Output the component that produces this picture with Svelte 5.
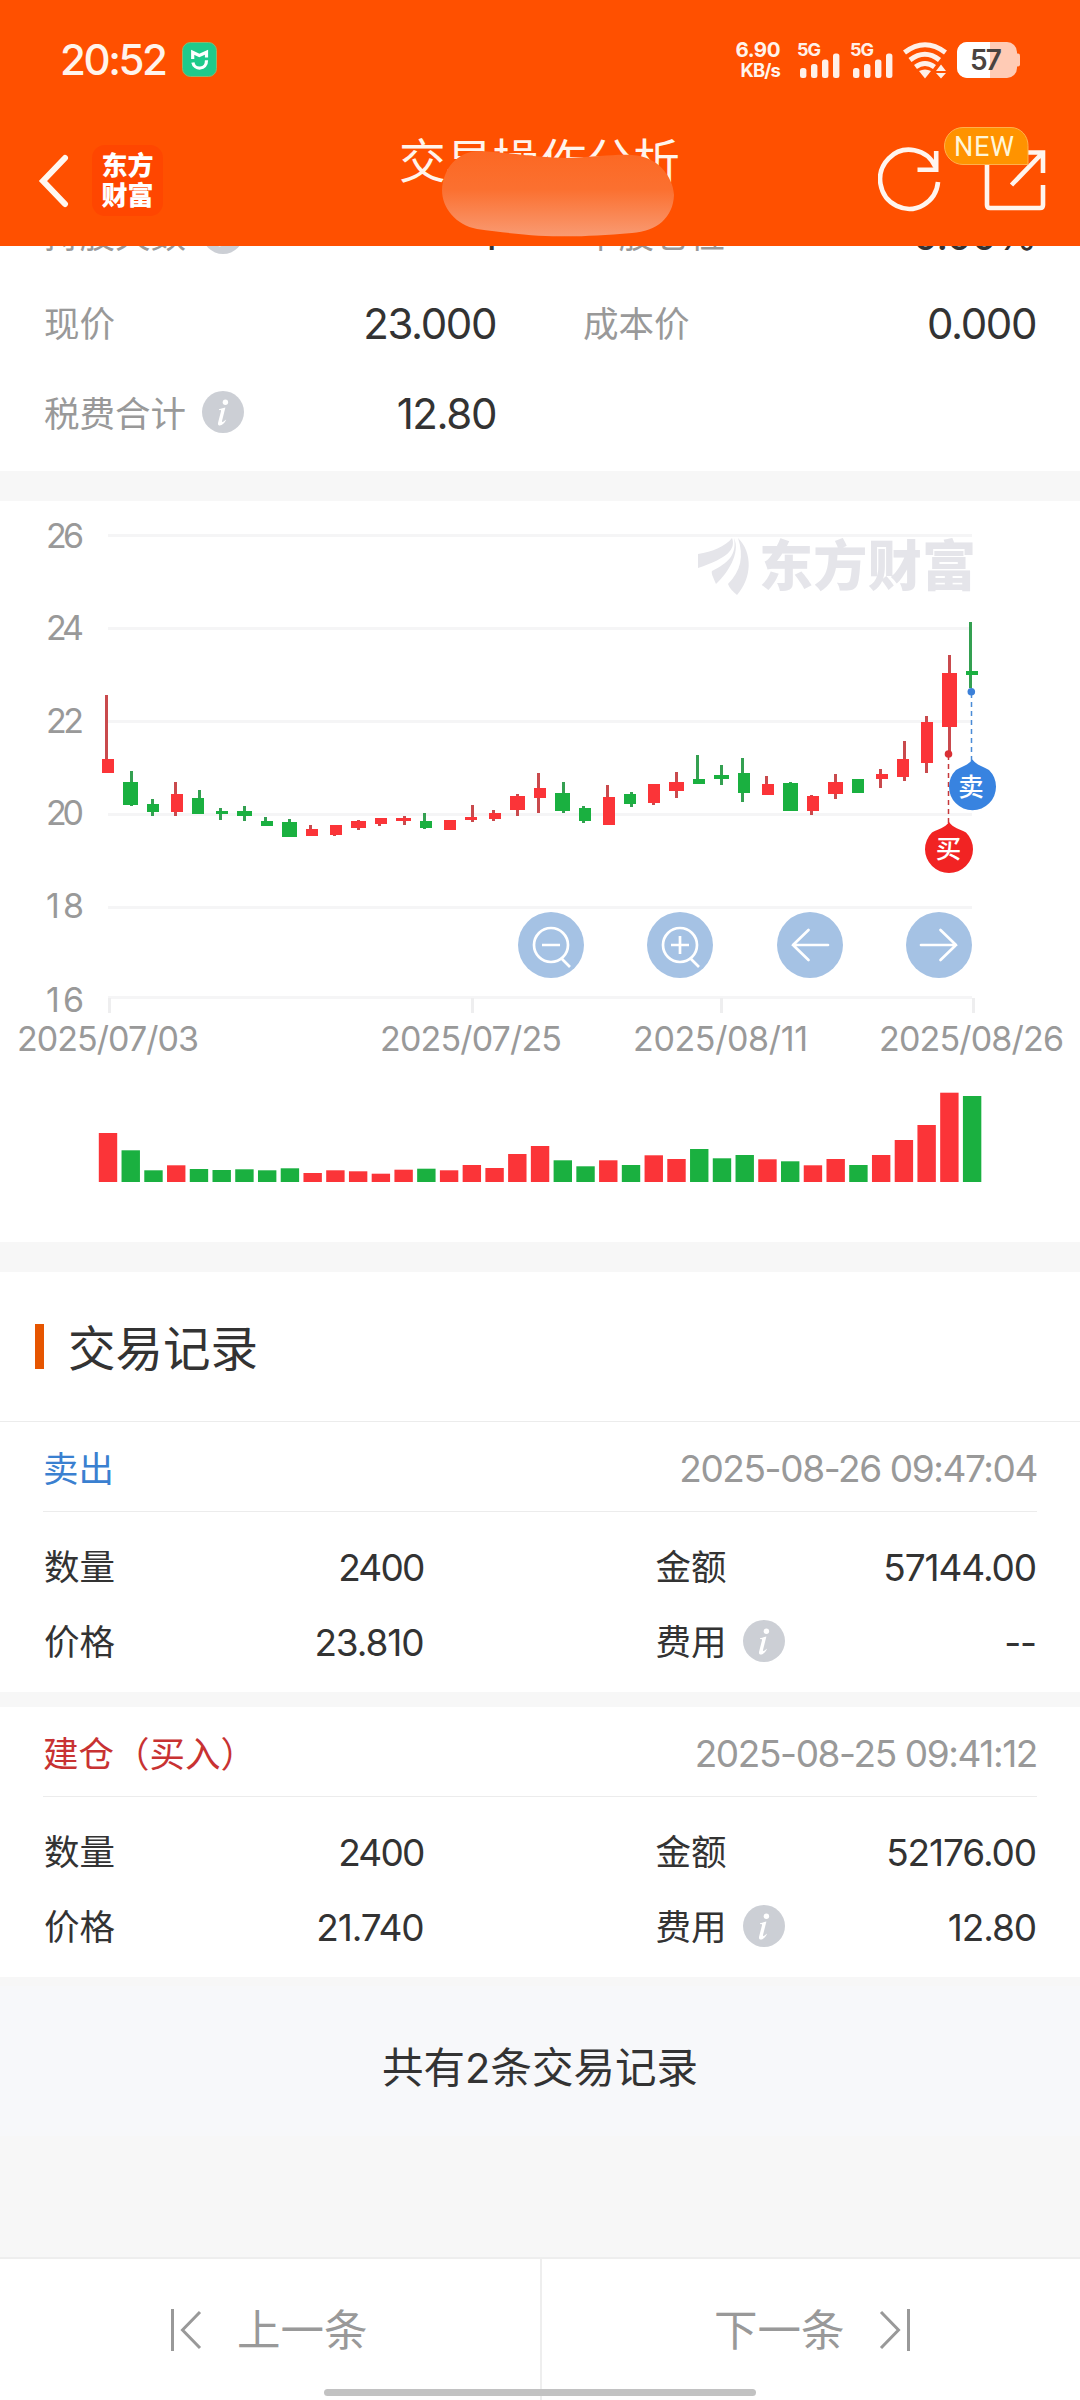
<script>
  // Plot units of the price chart: 2.904 units per px across, 3 per px down, from y = 500.
  const px = (v) => Math.round(v / 2.904);
  const py = (v) => Math.round(v / 3) - 1;

  // [up?, body left, body right, body top, body bottom, wick x, wick top, wick bottom]
  const candles = [
    [1, 296, 331, 777, 818, 309, 586, 818], [0, 357, 401, 846, 915, 379, 812, 917],
    [0, 427, 462, 912, 936, 440, 898, 949], [1, 496, 531, 882, 936, 509, 846, 948],
    [0, 558, 592, 893, 941, 579, 870, 941], [0, 627, 662, 933, 942, 640, 925, 960],
    [0, 688, 732, 932, 949, 710, 919, 963], [0, 758, 793, 963, 979, 770, 951, 979],
    [0, 819, 862, 966, 1012, 840, 956, 1012], [1, 889, 923, 987, 1008, 901, 975, 1008],
    [1, 958, 993, 974, 1004, 971, 974, 1008], [1, 1019, 1063, 963, 983, 1041, 960, 991],
    [1, 1089, 1124, 955, 971, 1102, 955, 977], [1, 1150, 1193, 954, 963, 1172, 948, 976],
    [0, 1219, 1254, 963, 983, 1232, 939, 987], [1, 1289, 1324, 961, 990, 1302, 961, 990],
    [1, 1350, 1385, 951, 961, 1372, 916, 965], [1, 1420, 1455, 939, 957, 1433, 931, 962],
    [1, 1481, 1524, 887, 930, 1502, 883, 948], [1, 1551, 1585, 864, 895, 1563, 819, 940],
    [0, 1612, 1656, 880, 932, 1634, 845, 938], [0, 1681, 1716, 923, 963, 1694, 917, 968],
    [1, 1751, 1785, 891, 975, 1764, 855, 975], [0, 1812, 1847, 883, 912, 1833, 875, 921],
    [1, 1882, 1916, 853, 908, 1895, 853, 914], [1, 1943, 1986, 847, 873, 1964, 817, 894],
    [0, 2012, 2047, 837, 852, 2025, 764, 852], [0, 2073, 2117, 826, 836, 2095, 796, 855],
    [0, 2143, 2178, 819, 878, 2156, 773, 906], [1, 2213, 2247, 853, 884, 2225, 828, 884],
    [0, 2274, 2317, 850, 932, 2295, 847, 934], [1, 2343, 2378, 889, 933, 2356, 884, 945],
    [1, 2404, 2448, 847, 881, 2426, 821, 896], [0, 2474, 2509, 837, 878, 2487, 837, 880],
    [1, 2544, 2578, 822, 837, 2556, 808, 864], [1, 2605, 2639, 777, 831, 2626, 723, 842],
    [1, 2674, 2708, 666, 789, 2688, 648, 819], [1, 2735, 2779, 519, 681, 2757, 465, 752],
    [0, 2805, 2840, 514, 525, 2818, 366, 565]
  ];
  const volumes = [
    49, 31.7, 11.7, 16.7, 13, 12, 12.7, 11.7, 13.7, 9, 11.7, 10.7, 8.3, 12.3, 13.3, 11.7, 17, 14, 28, 36,
    21.7, 15.7, 21.7, 17, 26.7, 23, 33, 23.7, 27, 22.7, 20.7, 16.7, 23, 17, 27, 42, 57, 89.3, 86
  ];
  const prices = [
    [26, 34, 47], [24, 127, 139], [22, 220, 232], [20, 313, 324], [18, 406, 417], [16, 496, 511]
  ];
  const dates = [
    ['2025/07/03', 17, 182, 109], ['2025/07/25', 380, 182, 472],
    ['2025/08/11', 633, 175, 721], ['2025/08/26', 879, 185, 973]
  ];
  const tools = [
    ['zoom-out', 551], ['zoom-in', 680], ['left', 810], ['right', 939]
  ];
  const records = [
    { kind: 'sell', name: '卖出', time: '2025-08-26 09:47:04', qty: '2400', amount: '57144.00', price: '23.810', fee: '--' },
    { kind: 'buy', name: '建仓（买入）', time: '2025-08-25 09:41:12', qty: '2400', amount: '52176.00', price: '21.740', fee: '12.80' }
  ];
</script>

{#snippet info()}
  <svg class="info" width="42" height="42" viewBox="0 0 42 42">
    <circle cx="21" cy="21" r="21" fill="#cccfd5" />
    <circle cx="23.4" cy="11.3" r="2.7" fill="#fff" />
    <path d="M17 18.3 C19.5 17.6 21.5 17 23.4 16.6 L20 30 C19.7 31.6 20.6 31.6 24.2 28.6 C22.5 33 18.5 35.5 16.6 34.2 C15.6 33.5 16 32 16.3 30.7 L19 20.2 C19.3 19 18.5 18.8 17 19.2 Z" fill="#fff" />
  </svg>
{/snippet}

{#snippet signal()}
  <svg width="46" height="44" viewBox="-4 -8 46 44">
    <text class="net" x="-1" y="14" textLength="24">5G</text>
    <g fill="#fff0e8">
      <rect x="2" y="26" width="6.4" height="10" rx="2.5" />
      <rect x="13" y="22" width="6.4" height="14" rx="2.5" />
      <rect x="24" y="17.5" width="6.4" height="18.5" rx="2.5" />
      <rect x="35" y="11.5" width="6.4" height="24.5" rx="2.5" />
    </g>
  </svg>
{/snippet}

<div class="screen">
  <header>
    <div class="status">
      <span class="clock">20:52</span>
      <svg class="mi" width="35" height="35" viewBox="0 0 35 35">
        <rect x=".5" y=".5" width="34" height="34" rx="8" fill="#1fca8b" stroke="#8fb56a" />
        <path d="M10.7 17V10.3L17.3 13.5L24.5 10.3V15.5M10.9 20.5C12 28 24.8 28.500 24.500 18.200" fill="none" stroke="#fff" stroke-width="3.2" />
      </svg>
      <div class="speed"><b>6.90</b><b class="unit">KB/s</b></div>
      <div class="sim">{@render signal()}</div>
      <div class="sim second">{@render signal()}</div>
      <svg class="wifi" width="44" height="37" viewBox="0 0 44 37">
        <g fill="none" stroke="#fff0e8" stroke-width="5">
          <path d="M1.500 10.500Q22 -5 42.500 10.500" />
          <path d="M7 18Q22 6.500 36.500 18" />
          <path d="M12.500 25Q22 18 31.500 25" />
        </g>
        <path d="M16 29Q22 26 28 29L22 36.500Z" fill="#fff0e8" />
        <path d="M38 22.500L43 29H33ZM38 36.500L43 31H33Z" fill="#fff0e8" />
      </svg>
      <svg class="battery" width="63" height="36" viewBox="0 0 63 36">
        <path d="M59 11.500h2q2 0 2 2v9q0 2-2 2h-2z" fill="#ffcbb5" />
        <rect width="60" height="36" rx="10" fill="#ffcbb5" />
        <path d="M10 0H33V36H10A10 10 0 0 1 0 26V10A10 10 0 0 1 10 0Z" fill="#fff" />
        <text x="13" y="28" textLength="32" class="level">57</text>
      </svg>
    </div>
    <div class="nav">
      <svg class="back" width="32" height="54" viewBox="0 0 32 54">
        <path d="M27 4L5 27L27 50" fill="none" stroke="#fff8f0" stroke-width="6" stroke-linecap="round" />
      </svg>
      <div class="brand"><span>东方</span><span>财富</span></div>
      <h1>交易操作分析</h1>
      <svg class="smudge" width="232" height="88" viewBox="0 0 232 88">
        <defs>
          <linearGradient id="smudge" x1="0" y1="0" x2="0" y2="1">
            <stop offset="0" stop-color="#fc6823" />
            <stop offset=".45" stop-color="#fb7030" />
            <stop offset="1" stop-color="#f99a72" />
          </linearGradient>
        </defs>
        <path d="M0 40C1 18 16 0 40 1C70 3 100 8 125 8C155 7 172 4 190 5C215 6 231 26 232 45C231 68 215 81 190 83C130 88 100 88 35 79C14 75 0 58 0 40Z" fill="url(#smudge)" />
      </svg>
      <svg class="actions" width="170" height="90" viewBox="0 0 170 90">
        <g fill="none" stroke="#fff5ee" stroke-width="4.600">
          <path d="M60 58A29 29.500 0 1 1 57.500 43" />
          <path d="M58.200 27V47M39.500 45.700H60.500" />
          <path d="M109 41V81Q109 84 112 84H162Q165 84 165 81V61M165 49V28.500H144.500M133.500 61L163.500 30" />
        </g>
        <path d="M85 3.500H133A17 18 0 0 1 150 21.500V40.500H85A18.500 18.500 0 0 1 85 3.500Z" fill="#ff9300" stroke="#ffb04d" />
        <text x="76" y="32" textLength="60" class="new">NEW</text>
      </svg>
    </div>
  </header>

  <section class="summary">
    <div class="row">
      <label>持股天数{@render info()}</label><b class="mid">1</b><label class="col2">单股仓位</label><b>0.00%</b>
    </div>
    <div class="row">
      <label>现价</label><b class="mid">23.000</b><label class="col2">成本价</label><b>0.000</b>
    </div>
    <div class="row">
      <label>税费合计{@render info()}</label><b class="mid">12.80</b>
    </div>
  </section>

  <section class="chart">
    <svg width="1080" height="741" viewBox="0 0 1080 741">
      {#each prices as [p, y, base]}
        <rect x="108" y={y - 1} width="864" height="3" fill="#f5f5f6" />
        <text x="46" y={base} textLength="38" class="axis">{p}</text>
      {/each}
      {#each dates as [d, x, w, tick]}
        <rect x={tick - 1} y="497" width="3" height="15" fill="#eeeeef" />
        <text {x} y="550" textLength={w} class="axis">{d}</text>
      {/each}

      <g fill="#e5e5ea">
        <path d="M698 53C712 51 726 45 732 37C736 48 728 57 698 67Z" />
        <path d="M734 37C741 52 727 73 716 83C713 76 711 72 712 70C728 62 737 54 734 37Z" />
        <path d="M738 37C753 52 752 77 737 94C732 90 729 86 728 83C741 70 744 55 738 37Z" />
        <text x="759" y="84.500" textLength="217" class="mark">东方财富</text>
      </g>

      {#each candles as [up, l, r, t, b, wx, wt, wb]}
        <rect x={px(wx) - 1} y={py(wt)} width="3" height={py(wb) - py(wt)} fill={up ? '#c94a4d' : '#34a051'} />
        <rect x={px(l)} y={py(t)} width={px(r) - px(l)} height={py(b) - py(t)} fill={up ? '#fb3438' : '#1ab040'} />
      {/each}

      <path d="M948.500 254V322" stroke="#c5383b" stroke-width="1.500" stroke-dasharray="5 4" />
      <path d="M971.500 192V260" stroke="#4a8bd6" stroke-width="1.500" stroke-dasharray="5 4" />
      <circle cx="948.500" cy="253" r="3.800" fill="#d93035" />
      <circle cx="971.300" cy="190.700" r="3.800" fill="#3c80d8" />
      <path d="M972.300 258.500C977 264.500 983 265.500 989 269A23.500 23.500 0 1 1 956 269C962 265.500 968 264.500 972.300 258.500Z" fill="#3883e0" />
      <text x="971" y="294.500" class="pin">卖</text>
      <path d="M949 321C953 327 960 328 966 331.500A24 23.700 0 1 1 932 331.500C938 328 945 327 949 321Z" fill="#f12323" />
      <text x="948.500" y="357" class="pin">买</text>

      {#each tools as [kind, x]}
        <g transform="translate({x} 444)" fill="none" stroke="#fff" stroke-width="2.700">
          <circle r="33" fill="#a5c2e4" stroke="none" />
          {#if kind === 'left'}
            <path d="M18 0H-17M-1.500 -15L-17 0L-1.500 15" stroke-linecap="round" />
          {:else if kind === 'right'}
            <path d="M-18 0H17M1.500 -15L17 0L1.500 15" stroke-linecap="round" />
          {:else}
            <circle r="17" />
            <path d="M-9 0H9M11 14L19 22" />
            {#if kind === 'zoom-in'}<path d="M0 -9V9" />{/if}
          {/if}
        </g>
      {/each}

      {#each volumes as h, i}
        <rect x={98.800 + i * 22.740} y={681 - h} width="18.400" height={h} fill={candles[i][0] ? '#fb3438' : '#1ab040'} />
      {/each}
    </svg>
  </section>

  <h2><span>交易记录</span></h2>

  {#each records as r}
    <section class="record">
      <div class="head"><span class={r.kind}>{r.name}</span><time>{r.time}</time></div>
      <div class="row"><label>数量</label><b class="mid">{r.qty}</b><label class="col2">金额</label><b>{r.amount}</b></div>
      <div class="row"><label>价格</label><b class="mid">{r.price}</b><label class="col2">费用{@render info()}</label><b>{r.fee}</b></div>
    </section>
  {/each}

  <div class="total">共有2条交易记录</div>

  <footer>
    <div>
      <svg width="32" height="44" viewBox="0 0 32 44"><path d="M2.500 1V43M30 4L12.500 22L30 40" /></svg>
      <span>上一条</span>
    </div>
    <div class="next">
      <span>下一条</span>
      <svg width="32" height="44" viewBox="0 0 32 44"><path d="M29.500 1V43M2 4L19.500 22L2 40" /></svg>
    </div>
    <i class="home"></i>
  </footer>
</div>

<style>
  :global(body) { background: #f7f7f7; }
  .screen {
    width: 1080px; height: 2400px; overflow: hidden; display: flex; flex-direction: column;
    background: #f7f7f7; color: #333; font-family: Inter, "Noto Sans CJK SC", sans-serif;
  }
  svg { display: block; flex: none; }
  header { height: 246px; flex: none; background: #ff5000; color: #fff4ec; position: relative; z-index: 1; }
  .status { display: flex; height: 36px; padding: 42px 60px 0 60px; }
  .clock { width: 122px; font-size: 42px; line-height: 36px; font-weight: 500; letter-spacing: -2.400px; white-space: nowrap; }
  .mi { margin-right: 519px; }
  .speed { width: 44px; margin-top: -4px; display: flex; flex-direction: column; align-items: flex-end; font-size: 20.500px; line-height: 24px; letter-spacing: -.5px; }
  .unit { font-size: 18.500px; line-height: 21px; margin-top: -2px; letter-spacing: -.9px; }
  .sim { margin: -8px 0 0 14px; }
  .second { margin-left: 7px; }
  .net { font: 700 18px Inter, sans-serif; fill: #fff0e8; }
  .wifi { margin-left: 10px; }
  .battery { margin-left: 10px; }
  .level { font: 600 28px Inter, sans-serif; fill: #4a4340; }
  .nav { position: relative; display: flex; align-items: flex-start; padding-top: 67px; height: 101px; }
  .back { margin: 9px 0 0 38px; }
  .brand {
    margin-left: 22px; width: 71px; height: 71px; border-radius: 13px; background: #ff4600; color: #fff;
    display: flex; flex-direction: column; align-items: center; justify-content: center;
    font-size: 26px; line-height: 30px; font-weight: 800;
  }
  h1 { margin: -12px 0 0 236px; font-size: 46.8px; line-height: 56px; font-weight: 400; white-space: nowrap; }
  .smudge { position: absolute; left: 442px; top: 72px; }
  .actions { margin: -21px 0 0 auto; padding-right: 32px; }
  .new { font: 400 27px Roboto, sans-serif; fill: #fff6d8; }

  .summary { flex: none; height: 225px; background: #fff; margin-bottom: 30px; display: flex; flex-direction: column; }
  .summary .row { height: 89.500px; flex: none; }
  .summary .row:first-child { margin-top: -57px; }
  .row { display: flex; align-items: center; padding: 0 44px; font-size: 35.500px; }
  label { display: flex; flex: none; align-items: center; width: 230px; padding-bottom: 3px; white-space: nowrap; }
  .col2 { width: 150px; }
  .info { margin: 1px 0 0 16px; }
  .row b { font-weight: 400; font-size: 37px; letter-spacing: -1.100px; flex: 1; text-align: right; }
  .summary label { color: #999; }
  .summary .row b { font-size: 42px; letter-spacing: -1.400px; padding-top: 1px; }
  .summary .row b.mid { flex: none; width: 222px; }
  .summary .col2 { margin-left: 87px; }

  .chart { flex: none; height: 741px; background: #fff; margin-bottom: 30px; }
  .axis { font: 400 34px Inter, sans-serif; fill: #999; }
  .mark { font: 900 54px "Noto Sans CJK SC", sans-serif; }
  .pin { font: 500 25.500px "Noto Sans CJK SC", sans-serif; fill: #fff; text-anchor: middle; }

  h2 {
    flex: none; box-sizing: border-box; height: 150px; margin: 0; padding: 0 35px; background: #fff; border-bottom: 1px solid #ececec;
    display: flex; align-items: center; gap: 24px; font-size: 47.500px; font-weight: 400;
  }
  h2 span { padding-bottom: 3px; }
  h2::before { content: ""; width: 9px; height: 45px; background: #e65500; }
  .record { flex: none; height: 270px; background: #fff; }
  .record + .record { margin-top: 15px; }
  .head {
    box-sizing: border-box; height: 90px; margin: 0 43px 18px; border-bottom: 1px solid #ececec;
    display: flex; align-items: center; justify-content: space-between; font-size: 35.500px;
  }
  .head time { color: #999; font-size: 37px; letter-spacing: -1.400px; padding-top: 4px; }
  .sell { color: #3a80d0; }
  .buy { color: #c83232; }
  .record .row { height: 75px; }
  .record label { padding-bottom: 6px; }
  .record .info { margin-top: 3px; }
  .record .row b.mid { flex: none; width: 149.5px; }
  .record .row:nth-child(2) b.mid { letter-spacing: -1.800px; }
  .record .col2 { margin-left: 232px; }

  .total {
    flex: none; height: 150px; box-sizing: border-box; margin: 9px 0 121px; padding-top: 53px; background: #f7f8fa;
    text-align: center; font-size: 41.500px; line-height: 58px;
  }
  footer {
    position: relative; flex: none; box-sizing: border-box; height: 143px; background: #fff; border-top: 2px solid #eee; color: #999;
    display: flex; font-size: 43.500px;
  }
  footer div { width: 540px; display: flex; height: 142px; align-items: center; box-sizing: border-box; padding-left: 170px; gap: 35px; }
  footer span { padding-bottom: 5px; }
  footer .next { border-left: 2px solid #eee; padding-left: 172px; gap: 34px; }
  footer path { fill: none; stroke: #999; stroke-width: 3; }
  .home { position: absolute; left: 324px; top: 130px; width: 432px; height: 7px; border-radius: 4px; background: #c2c2c2; }
</style>
